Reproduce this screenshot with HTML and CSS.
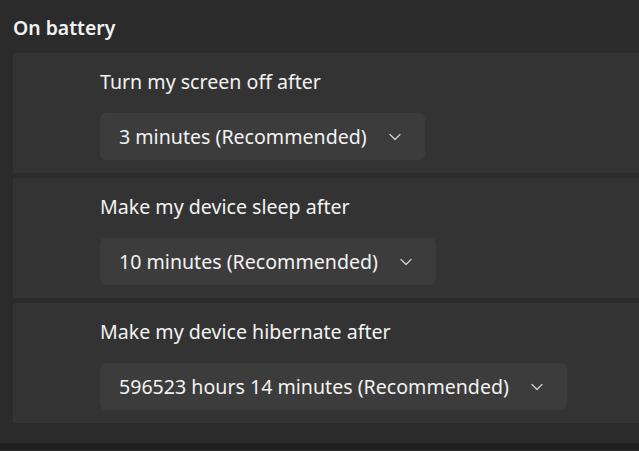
FILE: index.html
```html
<!DOCTYPE html>
<html>
<head>
<meta charset="utf-8">
<link rel="stylesheet" href="styles.css">
</head>
<body>
<div class="page">
  <h2 class="title">On battery</h2>
  <div class="cards">
    <div class="card">
      <div class="label">Turn my screen off after</div>
      <div class="dropdown"><span class="val">3 minutes (Recommended)</span>
        <svg class="chev" width="12" height="8" viewBox="0 0 12 8"><path d="M1 1.5 L6 6.5 L11 1.5" fill="none" stroke="#cfcfcf" stroke-width="1.3" stroke-linecap="round" stroke-linejoin="round"/></svg>
      </div>
    </div>
    <div class="card">
      <div class="label">Make my device sleep after</div>
      <div class="dropdown"><span class="val">10 minutes (Recommended)</span>
        <svg class="chev" width="12" height="8" viewBox="0 0 12 8"><path d="M1 1.5 L6 6.5 L11 1.5" fill="none" stroke="#cfcfcf" stroke-width="1.3" stroke-linecap="round" stroke-linejoin="round"/></svg>
      </div>
    </div>
    <div class="card">
      <div class="label">Make my device hibernate after</div>
      <div class="dropdown"><span class="val">596523 hours 14 minutes (Recommended)</span>
        <svg class="chev" width="12" height="8" viewBox="0 0 12 8"><path d="M1 1.5 L6 6.5 L11 1.5" fill="none" stroke="#cfcfcf" stroke-width="1.3" stroke-linecap="round" stroke-linejoin="round"/></svg>
      </div>
    </div>
  </div>
  <div class="footer"></div>
</div>
</body>
</html>
```

FILE: styles.css
```css
html, body {
  margin: 0;
  padding: 0;
  background: #2b2b2b;
  height: 100%;
  overflow: hidden;
}
.page {
  font-family: "Noto Sans", "Open Sans", sans-serif;
  color: #f2f2f2;
  display: flex;
  flex-direction: column;
  height: 451px;
}
.title {
  margin: 0;
  padding: 14px 0 0 13px;
  height: 53px;
  box-sizing: border-box;
  font-size: 19.4px;
  font-weight: 600;
  line-height: 28px;
}
.cards {
  display: flex;
  flex-direction: column;
  gap: 5px;
  padding-left: 13px;
}
.card {
  background: #333333;
  height: 120px;
  box-sizing: border-box;
  padding: 17px 0 0 87px;
}
.label {
  font-size: 19.6px;
  line-height: 24px;
  height: 24px;
}
.dropdown {
  margin-top: 19px;
  display: inline-flex;
  align-items: center;
  height: 47px;
  box-sizing: border-box;
  padding: 0 24px 0 19px;
  background: #3c3c3c;
  border-radius: 6px;
  font-size: 19.6px;
}
.val {
  line-height: 24px;
}
.chev {
  margin-left: 22px;
}
.footer {
  margin-top: 20px;
  height: 7px;
  background: #1f1f1f;
}
```
